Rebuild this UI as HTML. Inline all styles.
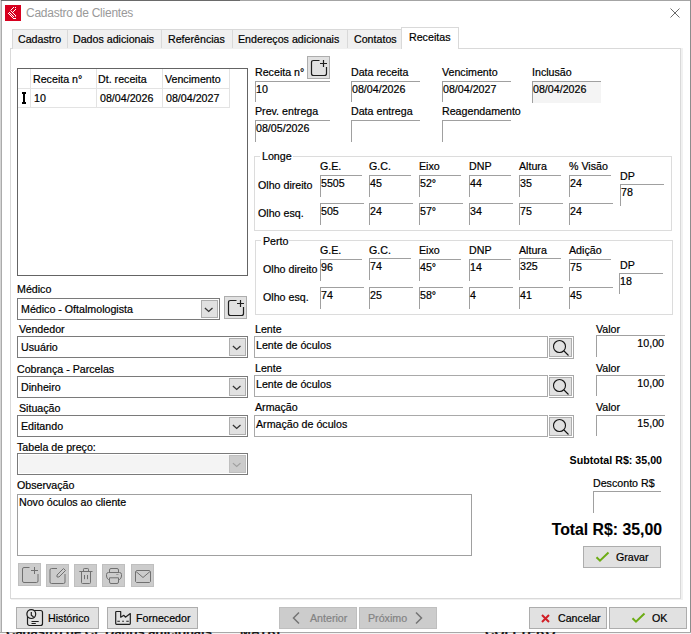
<!DOCTYPE html>
<html><head><meta charset="utf-8">
<style>
*{box-sizing:border-box}
html,body{margin:0;padding:0;width:691px;height:634px;overflow:hidden;background:#fff;font-family:"Liberation Sans",sans-serif;font-size:10.67px;color:#000}
.a{position:absolute}
.t{position:absolute;font-size:10.67px;line-height:12px;white-space:nowrap;-webkit-text-stroke:0.2px currentColor}
.ed{position:absolute;border-top:1px solid #a0a0a0;border-left:1px solid #a0a0a0;background:#fff}
.cb{position:absolute;border:1px solid #7a7a7a;background:#fff}
.dd{position:absolute;background:#e1e1e1;border:1px solid #adadad}
.btn{position:absolute;background:#e1e1e1;border:1px solid #adadad}
.dis{position:absolute;background:#cccccc;border:1px solid #bfbfbf}
.gb{position:absolute;border:1px solid #dcdcdc}
.box{position:absolute;border:1px solid #7a7a7a;background:#fff}
svg{position:absolute;overflow:visible}
</style></head><body>
<!-- window frame -->
<div class="a" style="left:0;top:0;width:691px;height:1px;background:#a4a4a4"></div>
<div class="a" style="left:0;top:0;width:240px;height:1px;background:#6a6a6a"></div>
<div class="a" style="left:0;top:0;width:1px;height:634px;background:#d4d4d4"></div>
<div class="a" style="left:1px;top:1px;width:1px;height:632px;background:#ababab"></div>
<div class="a" style="left:690px;top:0;width:1px;height:634px;background:#8c8c8c"></div>
<div class="a" style="left:0;top:632px;width:691px;height:2px;background:#f4f4f4;overflow:hidden">
 <div class="a" style="left:0;top:0;width:691px;height:1px;background:#a8a8a8"></div>
 <div class="t" style="left:6px;top:-7px;font-size:13px;line-height:14px;color:#1a1a1a;font-weight:bold">Cadastro de Cl</div>
 <div class="t" style="left:105px;top:-7px;font-size:13px;line-height:14px;color:#1a1a1a;font-weight:bold">Dados adicionais</div>
 <div class="t" style="left:240px;top:-7px;font-size:13px;line-height:14px;color:#1a1a1a;font-weight:bold">MATRI</div>
 <div class="t" style="left:485px;top:-7px;font-size:13px;line-height:14px;color:#1a1a1a;font-weight:bold">COLLTERO</div>
</div>
</div>

<!-- title -->
<div class="a" style="left:5px;top:5px;width:16px;height:16px;background:#d7001f"></div>
<svg style="left:5px;top:5px" width="16" height="16" viewBox="0 0 16 16" fill="#fff" shape-rendering="crispEdges"><rect x="8" y="2" width="1" height="1"/><rect x="10" y="2" width="1" height="1"/><rect x="7" y="3" width="1" height="1"/><rect x="6" y="4" width="1" height="1"/><rect x="10" y="4" width="1" height="1"/><rect x="9" y="5" width="1" height="1"/><rect x="6" y="6" width="1" height="1"/><rect x="8" y="6" width="1" height="1"/><rect x="4" y="7" width="1" height="1"/><rect x="7" y="7" width="1" height="1"/><rect x="3" y="8" width="1" height="1"/><rect x="5" y="8" width="1" height="1"/><rect x="8" y="8" width="1" height="1"/><rect x="4" y="9" width="1" height="1"/><rect x="6" y="9" width="1" height="1"/><rect x="9" y="9" width="1" height="1"/><rect x="5" y="10" width="1" height="1"/><rect x="7" y="10" width="1" height="1"/><rect x="10" y="10" width="1" height="1"/><rect x="6" y="11" width="1" height="1"/><rect x="8" y="11" width="1" height="1"/><rect x="7" y="12" width="1" height="1"/><rect x="8" y="13" width="1" height="1"/><rect x="9" y="13" width="1" height="1"/><rect x="10" y="13" width="1" height="1"/><rect x="5" y="5" width="1" height="1" fill="#f0a0a8"/><rect x="10" y="11" width="1" height="1" fill="#f0a0a8"/></svg>
<div class="t" style="left:26px;top:6px;font-size:12px;letter-spacing:-0.25px;line-height:14px;color:#999;-webkit-text-stroke:0">Cadastro de Clientes</div>
<svg style="left:670px;top:8px" width="10" height="10" viewBox="0 0 10 10">
  <path d="M0.5 0.5 L9.5 9.5 M9.5 0.5 L0.5 9.5" stroke="#6a6a6a" stroke-width="1"/>
</svg>

<!-- tabs -->
<div class="a" style="left:681px;top:48px;width:2px;height:552px;background:#f1f1f1"></div>
<div class="a" style="left:11px;top:599px;width:672px;height:1px;background:#f1f1f1"></div>
<div class="a" style="left:10px;top:48px;width:671px;height:551px;border:1px solid #d9d9d9;background:#fff"></div>
<div class="a" style="left:12px;top:29px;width:390px;height:20px;background:#f0f0f0;border:1px solid #d9d9d9;border-bottom:none"></div>
<div class="a" style="left:67px;top:30px;width:1px;height:18px;background:#d9d9d9"></div>
<div class="a" style="left:161px;top:30px;width:1px;height:18px;background:#d9d9d9"></div>
<div class="a" style="left:232px;top:30px;width:1px;height:18px;background:#d9d9d9"></div>
<div class="a" style="left:347px;top:30px;width:1px;height:18px;background:#d9d9d9"></div>
<div class="a" style="left:401px;top:27px;width:58px;height:22px;background:#fff;border:1px solid #d9d9d9;border-bottom:none"></div>
<div class="t" style="left:18px;top:33px">Cadastro</div>
<div class="t" style="left:73px;top:33px">Dados adicionais</div>
<div class="t" style="left:168px;top:33px">Referências</div>
<div class="t" style="left:238px;top:33px">Endereços adicionais</div>
<div class="t" style="left:354px;top:33px">Contatos</div>
<div class="t" style="left:409px;top:31px">Receitas</div>


<!-- grid -->
<div class="a" style="left:17px;top:68px;width:231px;height:208px;border:1px solid #646464;background:#fff"></div>
<div class="a" style="left:18px;top:88px;width:211px;height:1px;background:#e3e3e3"></div>
<div class="a" style="left:18px;top:107px;width:211px;height:1px;background:#e3e3e3"></div>
<div class="a" style="left:30px;top:69px;width:1px;height:39px;background:#e3e3e3"></div>
<div class="a" style="left:96px;top:69px;width:1px;height:39px;background:#e3e3e3"></div>
<div class="a" style="left:162px;top:69px;width:1px;height:39px;background:#e3e3e3"></div>
<div class="a" style="left:229px;top:69px;width:1px;height:39px;background:#e3e3e3"></div>
<div class="t" style="left:33px;top:73px">Receita n°</div>
<div class="t" style="left:98px;top:73px">Dt. receita</div>
<div class="t" style="left:165px;top:73px">Vencimento</div>
<svg style="left:22px;top:92px" width="4" height="12" viewBox="0 0 4 12"><path d="M0 0 H4 V2 H3 V10 H4 V12 H0 V10 H1 V2 H0 Z" fill="#000"/></svg>
<div class="t" style="left:34px;top:92px">10</div>
<div class="t" style="left:100px;top:92px">08/04/2026</div>
<div class="t" style="left:166px;top:92px">08/04/2027</div>

<!-- top fields -->
<div class="t" style="left:255px;top:66px">Receita n°</div>
<div class="btn" style="left:307px;top:56px;width:23px;height:23px"></div>
<svg style="left:307px;top:56px" width="23" height="23" viewBox="0 0 23 23">
  <path d="M12.5 4.5 H6.5 Q4.5 4.5 4.5 6.5 V17.5 Q4.5 19.5 6.5 19.5 H17.5 Q19.5 19.5 19.5 17.5 V11" stroke="#1e1e1e" stroke-width="1.2" fill="none"/>
  <path d="M13 7.5 H20 M16.5 4 V11" stroke="#1e1e1e" stroke-width="1.2" fill="none"/>
</svg>
<div class="ed" style="left:255px;top:81px;width:75px;height:21px"></div>
<div class="t" style="left:256px;top:83px">10</div>
<div class="t" style="left:351px;top:66px">Data receita</div>
<div class="ed" style="left:351px;top:81px;width:69px;height:21px"></div>
<div class="t" style="left:352px;top:83px">08/04/2026</div>
<div class="t" style="left:442px;top:66px">Vencimento</div>
<div class="ed" style="left:442px;top:81px;width:69px;height:21px"></div>
<div class="t" style="left:443px;top:83px">08/04/2027</div>
<div class="t" style="left:532px;top:66px">Inclusão</div>
<div class="ed" style="left:532px;top:81px;width:69px;height:22px;background:#f4f4f4"></div>
<div class="t" style="left:533px;top:83px">08/04/2026</div>

<div class="t" style="left:255px;top:105px">Prev. entrega</div>
<div class="ed" style="left:255px;top:120px;width:75px;height:22px"></div>
<div class="t" style="left:256px;top:122px">08/05/2026</div>
<div class="t" style="left:351px;top:105px">Data entrega</div>
<div class="ed" style="left:351px;top:120px;width:69px;height:22px"></div>
<div class="t" style="left:442px;top:105px">Reagendamento</div>
<div class="ed" style="left:442px;top:120px;width:69px;height:22px"></div>


<!-- Longe -->
<div class="gb" style="left:254px;top:156px;width:418px;height:75px"></div>
<div class="a" style="left:260px;top:150px;width:33px;height:12px;background:#fff"></div>
<div class="t" style="left:262px;top:150px">Longe</div>
<div class="t" style="left:320px;top:160px">G.E.</div>
<div class="t" style="left:369px;top:160px">G.C.</div>
<div class="t" style="left:419px;top:160px">Eixo</div>
<div class="t" style="left:469px;top:160px">DNP</div>
<div class="t" style="left:519px;top:160px">Altura</div>
<div class="t" style="left:569px;top:160px">% Visão</div>
<div class="t" style="left:258px;top:179px">Olho direito</div>
<div class="t" style="left:258px;top:207px">Olho esq.</div>
<div class="ed" style="left:320px;top:175px;width:42px;height:22px"></div>
<div class="ed" style="left:369px;top:175px;width:42px;height:22px"></div>
<div class="ed" style="left:419px;top:175px;width:42px;height:22px"></div>
<div class="ed" style="left:469px;top:175px;width:42px;height:22px"></div>
<div class="ed" style="left:519px;top:175px;width:42px;height:22px"></div>
<div class="ed" style="left:569px;top:175px;width:42px;height:22px"></div>
<div class="ed" style="left:320px;top:203px;width:44px;height:22px"></div>
<div class="ed" style="left:369px;top:203px;width:44px;height:22px"></div>
<div class="ed" style="left:419px;top:203px;width:44px;height:22px"></div>
<div class="ed" style="left:469px;top:203px;width:44px;height:22px"></div>
<div class="ed" style="left:519px;top:203px;width:44px;height:22px"></div>
<div class="ed" style="left:569px;top:203px;width:44px;height:22px"></div>
<div class="t" style="left:321px;top:177px">5505</div>
<div class="t" style="left:370px;top:177px">45</div>
<div class="t" style="left:420px;top:177px">52°</div>
<div class="t" style="left:470px;top:177px">44</div>
<div class="t" style="left:520px;top:177px">35</div>
<div class="t" style="left:570px;top:177px">24</div>
<div class="t" style="left:321px;top:205px">505</div>
<div class="t" style="left:370px;top:205px">24</div>
<div class="t" style="left:420px;top:205px">57°</div>
<div class="t" style="left:470px;top:205px">34</div>
<div class="t" style="left:520px;top:205px">75</div>
<div class="t" style="left:570px;top:205px">24</div>
<div class="t" style="left:620px;top:170px">DP</div>
<div class="ed" style="left:620px;top:184px;width:44px;height:22px"></div>
<div class="t" style="left:621px;top:186px">78</div>

<!-- Perto -->
<div class="gb" style="left:255px;top:240px;width:418px;height:75px"></div>
<div class="a" style="left:261px;top:234px;width:28px;height:12px;background:#fff"></div>
<div class="t" style="left:263px;top:235px">Perto</div>
<div class="t" style="left:320px;top:244px">G.E.</div>
<div class="t" style="left:369px;top:244px">G.C.</div>
<div class="t" style="left:419px;top:244px">Eixo</div>
<div class="t" style="left:469px;top:244px">DNP</div>
<div class="t" style="left:519px;top:244px">Altura</div>
<div class="t" style="left:569px;top:244px">Adição</div>
<div class="t" style="left:263px;top:263px">Olho direito</div>
<div class="t" style="left:263px;top:291px">Olho esq.</div>
<div class="ed" style="left:320px;top:259px;width:42px;height:22px"></div>
<div class="ed" style="left:369px;top:258px;width:42px;height:22px"></div>
<div class="ed" style="left:419px;top:259px;width:42px;height:22px"></div>
<div class="ed" style="left:469px;top:259px;width:42px;height:22px"></div>
<div class="ed" style="left:519px;top:258px;width:42px;height:22px"></div>
<div class="ed" style="left:569px;top:259px;width:42px;height:22px"></div>
<div class="ed" style="left:320px;top:287px;width:44px;height:22px"></div>
<div class="ed" style="left:369px;top:287px;width:44px;height:22px"></div>
<div class="ed" style="left:419px;top:287px;width:44px;height:22px"></div>
<div class="ed" style="left:469px;top:287px;width:44px;height:22px"></div>
<div class="ed" style="left:519px;top:287px;width:44px;height:22px"></div>
<div class="ed" style="left:569px;top:287px;width:44px;height:22px"></div>
<div class="t" style="left:321px;top:261px">96</div>
<div class="t" style="left:370px;top:260px">74</div>
<div class="t" style="left:420px;top:261px">45°</div>
<div class="t" style="left:470px;top:261px">14</div>
<div class="t" style="left:520px;top:260px">325</div>
<div class="t" style="left:570px;top:261px">75</div>
<div class="t" style="left:321px;top:289px">74</div>
<div class="t" style="left:370px;top:289px">25</div>
<div class="t" style="left:420px;top:289px">58°</div>
<div class="t" style="left:470px;top:289px">4</div>
<div class="t" style="left:520px;top:289px">41</div>
<div class="t" style="left:570px;top:289px">45</div>
<div class="t" style="left:620px;top:259px">DP</div>
<div class="ed" style="left:619px;top:273px;width:44px;height:21px"></div>
<div class="t" style="left:620px;top:275px">18</div>

<!-- combos -->
<div class="t" style="left:17px;top:283px">Médico</div>
<div class="cb" style="left:17px;top:298px;width:203px;height:22px"></div>
<div class="dd" style="left:201px;top:300px;width:17px;height:18px"></div>
<svg style="left:204px;top:307px" width="10" height="6" viewBox="0 0 10 6"><path d="M0.9 1.1 L4.7 4.5 L8.5 1.1" stroke="#333" stroke-width="1.3" fill="none"/></svg>
<div class="t" style="left:21px;top:303px">Médico - Oftalmologista</div>
<div class="btn" style="left:224px;top:296px;width:23px;height:23px"></div>
<svg style="left:224px;top:296px" width="23" height="23" viewBox="0 0 23 23">
  <path d="M12.5 4.5 H6.5 Q4.5 4.5 4.5 6.5 V17.5 Q4.5 19.5 6.5 19.5 H17.5 Q19.5 19.5 19.5 17.5 V11" stroke="#1e1e1e" stroke-width="1.2" fill="none"/>
  <path d="M13 7.5 H20 M16.5 4 V11" stroke="#1e1e1e" stroke-width="1.2" fill="none"/>
</svg>
<div class="t" style="left:19px;top:323px">Vendedor</div>
<div class="cb" style="left:17px;top:336px;width:231px;height:22px"></div>
<div class="dd" style="left:229px;top:338px;width:17px;height:18px"></div>
<svg style="left:232px;top:345px" width="10" height="6" viewBox="0 0 10 6"><path d="M0.9 1.1 L4.7 4.5 L8.5 1.1" stroke="#333" stroke-width="1.3" fill="none"/></svg>
<div class="t" style="left:21px;top:341px">Usuário</div>
<div class="t" style="left:17px;top:363px">Cobrança - Parcelas</div>
<div class="cb" style="left:17px;top:376px;width:231px;height:22px"></div>
<div class="dd" style="left:229px;top:378px;width:17px;height:18px"></div>
<svg style="left:232px;top:385px" width="10" height="6" viewBox="0 0 10 6"><path d="M0.9 1.1 L4.7 4.5 L8.5 1.1" stroke="#333" stroke-width="1.3" fill="none"/></svg>
<div class="t" style="left:21px;top:381px">Dinheiro</div>
<div class="t" style="left:19px;top:402px">Situação</div>
<div class="cb" style="left:17px;top:415px;width:231px;height:22px"></div>
<div class="dd" style="left:229px;top:417px;width:17px;height:18px"></div>
<svg style="left:232px;top:424px" width="10" height="6" viewBox="0 0 10 6"><path d="M0.9 1.1 L4.7 4.5 L8.5 1.1" stroke="#333" stroke-width="1.3" fill="none"/></svg>
<div class="t" style="left:21px;top:420px">Editando</div>
<div class="t" style="left:17px;top:441px">Tabela de preço:</div>
<div class="cb" style="left:17px;top:453px;width:231px;height:22px"></div>
<div class="a" style="left:19px;top:455px;width:210px;height:18px;background:#f4f4f4"></div>
<div class="a" style="left:229px;top:455px;width:17px;height:18px;background:#cccccc;border:1px solid #bfbfbf"></div>
<svg style="left:232px;top:462px" width="10" height="6" viewBox="0 0 10 6"><path d="M0.9 1.1 L4.7 4.5 L8.5 1.1" stroke="#a0a0a0" stroke-width="1.2" fill="none"/></svg>

<!-- lente -->
<div class="t" style="left:255px;top:323px">Lente</div>
<div class="box" style="left:254px;top:336px;width:294px;height:22px;border-color:#a9a9a9"></div>
<div class="t" style="left:256px;top:339px">Lente de óculos</div>
<div class="a" style="left:549px;top:336px;width:25px;height:23px;border:1px solid #a9a9a9;border-left:none"></div>
<div class="btn" style="left:549px;top:338px;width:23px;height:19px"></div>
<svg style="left:549px;top:336px" width="25" height="23" viewBox="0 0 25 23"><circle cx="10.5" cy="10.5" r="6" stroke="#111" stroke-width="1.1" fill="none"/><path d="M15 15 L19.5 19.5" stroke="#111" stroke-width="1.1"/></svg>

<div class="t" style="left:255px;top:362px">Lente</div>
<div class="box" style="left:254px;top:375px;width:294px;height:22px;border-color:#a9a9a9"></div>
<div class="t" style="left:256px;top:378px">Lente de óculos</div>
<div class="a" style="left:549px;top:375px;width:25px;height:23px;border:1px solid #a9a9a9;border-left:none"></div>
<div class="btn" style="left:549px;top:377px;width:23px;height:19px"></div>
<svg style="left:549px;top:375px" width="25" height="23" viewBox="0 0 25 23"><circle cx="10.5" cy="10.5" r="6" stroke="#111" stroke-width="1.1" fill="none"/><path d="M15 15 L19.5 19.5" stroke="#111" stroke-width="1.1"/></svg>

<div class="t" style="left:255px;top:401px">Armação</div>
<div class="box" style="left:254px;top:415px;width:294px;height:22px;border-color:#a9a9a9"></div>
<div class="t" style="left:256px;top:418px">Armação de óculos</div>
<div class="a" style="left:549px;top:415px;width:25px;height:23px;border:1px solid #a9a9a9;border-left:none"></div>
<div class="btn" style="left:549px;top:417px;width:23px;height:19px"></div>
<svg style="left:549px;top:415px" width="25" height="23" viewBox="0 0 25 23"><circle cx="10.5" cy="10.5" r="6" stroke="#111" stroke-width="1.1" fill="none"/><path d="M15 15 L19.5 19.5" stroke="#111" stroke-width="1.1"/></svg>

<div class="t" style="left:596px;top:323px">Valor</div>
<div class="ed" style="left:596px;top:335px;width:69px;height:22px"></div>
<div class="t" style="left:596px;top:337px;width:68px;text-align:right">10,00</div>
<div class="t" style="left:596px;top:362px">Valor</div>
<div class="ed" style="left:596px;top:375px;width:69px;height:21px"></div>
<div class="t" style="left:596px;top:377px;width:68px;text-align:right">10,00</div>
<div class="t" style="left:596px;top:401px">Valor</div>
<div class="ed" style="left:596px;top:415px;width:69px;height:21px"></div>
<div class="t" style="left:596px;top:417px;width:68px;text-align:right">15,00</div>

<div class="t" style="left:540px;top:454px;width:122px;text-align:right;font-weight:bold;-webkit-text-stroke:0">Subtotal R$: 35,00</div>
<div class="t" style="left:593px;top:477px">Desconto R$</div>
<div class="ed" style="left:593px;top:491px;width:68px;height:22px"></div>
<div class="t" style="left:500px;top:521px;width:162px;text-align:right;font-weight:bold;font-size:15.8px;line-height:18px;-webkit-text-stroke:0.1px">Total R$: 35,00</div>
<div class="btn" style="left:583px;top:546px;width:78px;height:22px"></div>
<svg style="left:595px;top:551px" width="15" height="11" viewBox="0 0 15 11"><path d="M1.5 6.2 L5 9.7 L13.5 1.5" stroke="#6cac14" stroke-width="2" fill="none"/></svg>
<div class="t" style="left:616px;top:551px">Gravar</div>

<!-- observacao -->
<div class="t" style="left:17px;top:479px">Observação</div>
<div class="box" style="left:17px;top:494px;width:455px;height:62px;border-color:#a0a0a0"></div>
<div class="t" style="left:19px;top:496px">Novo óculos ao cliente</div>


<!-- disabled icon buttons -->
<div class="dis" style="left:18px;top:563px;width:23px;height:23px"></div>
<svg style="left:18px;top:563px" width="23" height="23" viewBox="0 0 23 23">
  <path d="M11.5 4.5 H6 Q4.5 4.5 4.5 6 V18 Q4.5 19.5 6 19.5 H18.5 Q20 19.5 20 18 V11" stroke="#707070" stroke-width="1" fill="none"/>
  <path d="M13 7.5 H20 M16.5 4 V11" stroke="#707070" stroke-width="1" fill="none"/>
</svg>
<div class="dis" style="left:46px;top:564px;width:23px;height:23px"></div>
<svg style="left:46px;top:564px" width="23" height="23" viewBox="0 0 23 23">
  <path d="M11 4.5 H5.5 Q4 4.5 4 6 V18 Q4 19.5 5.5 19.5 H17.5 Q19 19.5 19 18 V10" stroke="#707070" stroke-width="1" fill="none"/>
  <path d="M11 13 L11 11 L17.5 4.5 L19.5 6.5 L13 13 Z" stroke="#707070" stroke-width="1" fill="none"/>
</svg>
<div class="dis" style="left:74px;top:564px;width:23px;height:23px"></div>
<svg style="left:74px;top:564px" width="23" height="23" viewBox="0 0 23 23">
  <path d="M5.3 7.5 H18.5 M9.5 7 V5.3 Q9.5 4.5 10.3 4.5 H13.7 Q14.5 4.5 14.5 5.3 V7 M7.5 7.5 V18.5 Q7.5 19.5 8.5 19.5 H15.5 Q16.5 19.5 16.5 18.5 V7.5 M10.5 11 V15.2 M13.5 11 V15.2" stroke="#707070" stroke-width="1" fill="none"/>
</svg>
<div class="dis" style="left:102px;top:564px;width:23px;height:23px"></div>
<svg style="left:102px;top:564px" width="23" height="23" viewBox="0 0 23 23">
  <path d="M7.5 8.5 V6 Q7.5 4.5 9 4.5 H15 Q16.5 4.5 16.5 6 V8.5 M6.8 15.8 Q4.5 14.5 4.5 12 V10.5 Q4.5 8.5 6.5 8.5 H17.5 Q19.5 8.5 19.5 10.5 V12 Q19.5 14.5 17.2 15.8 M7.5 13.8 H16.5 V18 Q16.5 19.5 15 19.5 H9 Q7.5 19.5 7.5 18 Z" stroke="#707070" stroke-width="1" fill="none"/>
  <path d="M14.2 10.5 H16.5" stroke="#9a9a9a" stroke-width="1"/>
</svg>
<div class="dis" style="left:131px;top:564px;width:23px;height:23px"></div>
<svg style="left:131px;top:564px" width="23" height="23" viewBox="0 0 23 23">
  <path d="M5.5 6.5 H18.5 L19.5 7.5 V17.5 L18.5 18.5 H5.5 L4.5 17.5 V7.5 Z" stroke="#707070" stroke-width="1" fill="none"/>
  <path d="M5 7.5 L12 13.5 L19 7.5" stroke="#707070" stroke-width="1" fill="none"/>
</svg>

<!-- bottom buttons -->
<div class="btn" style="left:16px;top:607px;width:83px;height:22px"></div>
<svg style="left:22px;top:606px" width="24" height="24" viewBox="0 0 24 24">
  <rect x="5.5" y="4.5" width="15" height="15" rx="2" stroke="#1e1e1e" stroke-width="1.2" fill="none"/>
  <circle cx="9.3" cy="8.1" r="4.4" stroke="#1e1e1e" stroke-width="1.2" fill="#e1e1e1"/>
  <path d="M9.3 6 V9.3 L11.6 10.9 M9.5 15.5 H16.7 M9.5 17.5 H13.8" stroke="#1e1e1e" stroke-width="1.2" fill="none"/>
</svg>
<div class="t" style="left:48px;top:612px">Histórico</div>
<div class="btn" style="left:107px;top:607px;width:91px;height:22px"></div>
<svg style="left:111px;top:606px" width="24" height="24" viewBox="0 0 24 24">
  <path d="M4.7 6.2 Q4.7 5.5 5.4 5.5 H9.7 V11.2 L12.9 9.3 L14.4 11.2 L19.3 7.6 V17.6 Q19.3 18.4 18.5 18.4 H5.5 Q4.7 18.4 4.7 17.6 Z" stroke="#1e1e1e" stroke-width="1.2" fill="none" stroke-linejoin="round"/>
  <path d="M6.3 15.3 H8.9 M11.2 15.3 H12.9 M15.3 15.3 H17.8" stroke="#1e1e1e" stroke-width="1.1"/>
</svg>
<div class="t" style="left:136px;top:612px">Fornecedor</div>

<div class="dis" style="left:279px;top:607px;width:78px;height:22px"></div>
<svg style="left:279px;top:607px" width="30" height="22" viewBox="0 0 30 22"><path d="M20 5.5 L14.5 11 L20 16.5" stroke="#747474" stroke-width="1.5" fill="none"/></svg>
<div class="t" style="left:310px;top:612px;color:#838383">Anterior</div>
<div class="dis" style="left:359px;top:607px;width:78px;height:22px"></div>
<div class="t" style="left:368px;top:612px;color:#838383">Próximo</div>
<svg style="left:359px;top:607px" width="78" height="22" viewBox="0 0 78 22"><path d="M57 5.5 L62.5 11 L57 16.5" stroke="#747474" stroke-width="1.5" fill="none"/></svg>

<div class="btn" style="left:529px;top:607px;width:78px;height:22px"></div>
<svg style="left:541px;top:614px" width="9" height="9" viewBox="0 0 9 9"><path d="M1 1 L8 8 M8 1 L1 8" stroke="#d11e26" stroke-width="2"/></svg>
<div class="t" style="left:558px;top:612px">Cancelar</div>
<div class="btn" style="left:609px;top:607px;width:78px;height:22px"></div>
<svg style="left:631px;top:612px" width="15" height="11" viewBox="0 0 15 11"><path d="M1.5 6.2 L5 9.7 L13.5 1.5" stroke="#6cac14" stroke-width="2" fill="none"/></svg>
<div class="t" style="left:652px;top:612px">OK</div>

</body></html>
